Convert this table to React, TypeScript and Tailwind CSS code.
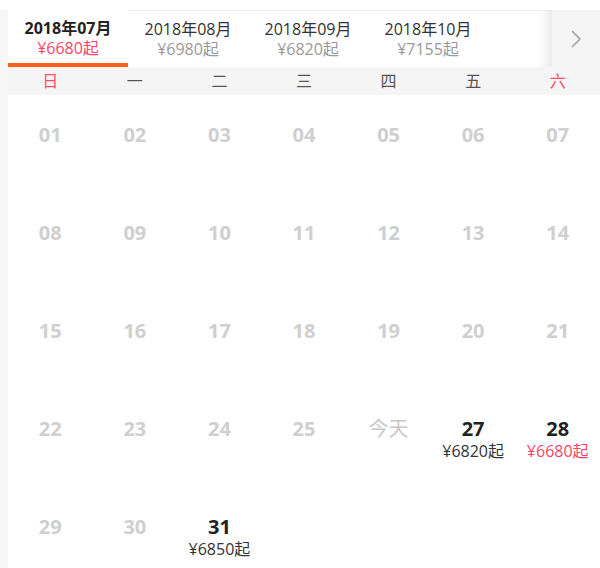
const font = { fontFamily: '"Open Sans", "Noto Sans CJK SC", sans-serif' };

const months = [
  { label: "2018年07月", price: "¥6680起", active: true },
  { label: "2018年08月", price: "¥6980起" },
  { label: "2018年09月", price: "¥6820起" },
  { label: "2018年10月", price: "¥7155起" },
];

const weekdays = ["日", "一", "二", "三", "四", "五", "六"];

type Day = { text: string; price?: string; red?: boolean; off?: boolean; today?: boolean };

const days: Day[] = [];
for (let d = 1; d <= 31; d++) {
  const text = d < 10 ? `0${d}` : `${d}`;
  if (d <= 25) days.push({ text, off: true });
  else if (d === 26) days.push({ text: "今天", off: true, today: true });
  else if (d === 27) days.push({ text, price: "¥6820起" });
  else if (d === 28) days.push({ text, price: "¥6680起", red: true });
  else if (d === 31) days.push({ text, price: "¥6850起" });
  else days.push({ text, off: true });
}

export default function App() {
  return (
    <div className="w-[600px] h-[568px] overflow-hidden bg-white pt-[10px]" style={font}>
      <div className="flex">
        <div className="w-[8px] shrink-0 bg-[#f7f7f7]" />
        <div className="flex-1 flex flex-col">
          {/* month tabs */}
          <div className="flex h-[57px] shrink-0">
            <div className="flex flex-1 border-t border-[#ececec] relative">
              {months.map((m) => (
                <div
                  key={m.label}
                  className={`w-[120px] flex flex-col items-center pt-[8px] ${
                    m.active ? "border-b-[4px] border-[#ff5f1a] -mt-px bg-white" : ""
                  }`}
                >
                  <span
                    className={`text-[16px] leading-[21px] ${
                      m.active ? "font-bold text-[#222]" : "text-[#333]"
                    }`}
                  >
                    {m.label}
                  </span>
                  <span
                    className={`text-[16px] leading-[19px] ${
                      m.active ? "text-[#ff4466]" : "text-[#999]"
                    }`}
                  >
                    {m.price}
                  </span>
                </div>
              ))}
              <div className="absolute right-0 top-0 bottom-0 w-[14px] bg-gradient-to-r from-transparent to-[#00000014]" />
            </div>
            <div className="w-[48px] bg-[#f5f5f5] flex items-center justify-center">
              <svg width="12" height="20" viewBox="0 0 12 20" fill="none">
                <path d="M2.5 2.5l7.5 7.5-7.5 7.5" stroke="#b0b0b0" strokeWidth="1.8" strokeLinecap="round" strokeLinejoin="round" />
              </svg>
            </div>
          </div>
          {/* weekdays */}
          <div className="grid grid-cols-7 h-[28px] shrink-0 bg-[#f5f5f5] items-center">
            {weekdays.map((w, i) => (
              <span
                key={w}
                className={`text-center text-[16px] leading-[28px] ${
                  i === 0 || i === 6 ? "text-[#ff4d6a]" : "text-[#555]"
                }`}
              >
                {w}
              </span>
            ))}
          </div>
          {/* days */}
          <div className="grid grid-cols-7 auto-rows-[98px]">
            {days.map((d, i) => (
              <div key={i} className="flex flex-col items-center pt-[27px]">
                {d.today ? (
                  <span className="text-[20px] leading-[26px] text-[#c8c8c8]">{d.text}</span>
                ) : (
                  <span
                    className={`text-[20px] leading-[26px] font-bold ${
                      d.off ? "text-[#cfcfcf]" : "text-[#222]"
                    }`}
                  >
                    {d.text}
                  </span>
                )}
                {d.price && (
                  <span
                    className={`text-[16px] leading-[18px] ${
                      d.red ? "text-[#ff4466]" : "text-[#333]"
                    }`}
                  >
                    {d.price}
                  </span>
                )}
              </div>
            ))}
          </div>
        </div>
      </div>
    </div>
  );
}
